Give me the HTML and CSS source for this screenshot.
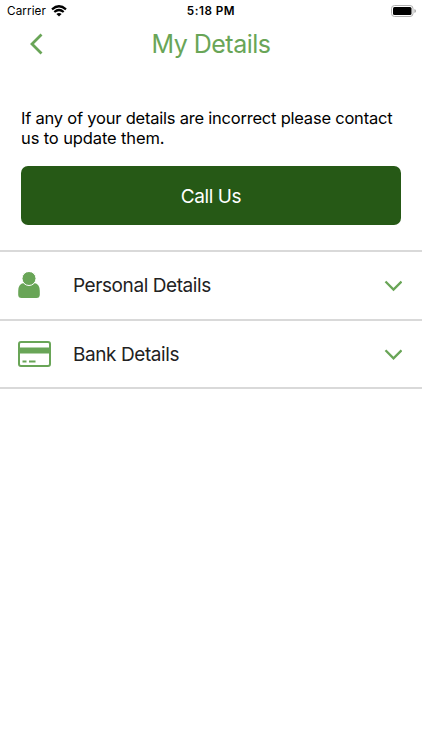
FILE: index.html
```html
<!DOCTYPE html>
<html lang="en">
<head>
<meta charset="utf-8">
<title>My Details</title>
<link rel="stylesheet" href="styles.css">
</head>
<body>
<div class="status">
  <div class="carrier"><span class="carrier-name">Carrier</span>
    <svg width="16" height="12" viewBox="0 0 16 12"><path d="M1 4.300Q8-1.800 15 4.300M3.300 7Q8 3 12.700 7" fill="none" stroke="#000" stroke-width="2.200"/><path d="M5.400 9Q8 6.800 10.600 9L8 11.600z"/></svg>
  </div>
  <span class="time">5:18 PM</span>
  <svg class="battery" width="25" height="12" viewBox="0 0 25 12"><rect x=".5" y=".5" width="21.500" height="11" rx="3" fill="none" stroke="#b0b0b0"/><rect x="2" y="2" width="18.500" height="8" rx="1.500"/><path d="M23.500 4q1.300 .5 1.300 2t-1.300 2z" fill="#909090"/></svg>
</div>
<header class="header">
  <svg class="back" width="14" height="22" viewBox="0 0 14 22"><path d="M12.500 1.500 3 11l9.500 9.500" fill="none" stroke="#69a557" stroke-width="2.800"/></svg>
  <h1 class="title">My Details</h1>
</header>
<main>
  <section class="contact">
    <p class="note"><span class="line1">If any of your details are incorrect please contact</span><br><span class="line2">us to update them.</span></p>
    <button class="call"><span>Call Us</span></button>
  </section>
  <div class="row">
    <svg class="icon" width="34" height="28" viewBox="0 0 34 28"><path d="M5.200 11.300C1.500 12 .2 15 .2 20v2.500Q.2 26 3.500 26h15q3.300 0 3.300-3.500V20c0-5-1.300-8-5-8.700z" fill="#69a557"/><circle cx="11" cy="6.500" r="7" fill="#69a557" stroke="#fff"/></svg>
    <span class="label">Personal Details</span>
    <svg class="chevron" width="18" height="12" viewBox="0 0 18 12"><path d="m1.500 1.500 8 8 8-8" fill="none" stroke="#69a557" stroke-width="2.300"/></svg>
  </div>
  <div class="row">
    <svg class="icon" width="34" height="28" viewBox="0 0 34 28"><rect x="1" y="2" width="31" height="24" rx="2" fill="none" stroke="#69a557" stroke-width="2"/><path d="M1 7.500h31v6H1zM4.500 20.500h4v2h-4zM11 20.500h6.500v2H11z" fill="#69a557"/></svg>
    <span class="label">Bank Details</span>
    <svg class="chevron" width="18" height="12" viewBox="0 0 18 12"><path d="m1.500 2.300 8 8 8-8" fill="none" stroke="#69a557" stroke-width="2.300"/></svg>
  </div>
</main>
</body>
</html>
```
FILE: styles.css
```css
* { box-sizing: border-box; }
body { margin: 0; background: #fff; color: #222; font-family: Inter, sans-serif; }
svg { display: block; flex: none; }
.status { height: 22px; display: grid; grid-template-columns: 1fr auto 1fr; align-items: center; padding: 0 6px 0 7px; }
.carrier { display: flex; align-items: center; gap: 5px; color: #000; font-size: 11.7px; letter-spacing: .1px; }
.time { color: #000; font-size: 11.7px; font-weight: 600; letter-spacing: .5px; margin-right: 1px; }
.battery { justify-self: end; }
.header { height: 43px; display: grid; grid-template-columns: 30px 1fr 30px; align-items: center; padding: 0 29px; }
.title { margin: 0; text-align: center; font-size: 25px; font-weight: 400; color: #69a557; letter-spacing: -.5px; }
.contact { padding: 43px 21px 25px; }
.note { margin: 0 0 18px; color: #000; font-size: 16.5px; line-height: 20px; letter-spacing: -.22px; white-space: nowrap; }
.line2 { letter-spacing: -.12px; }
.call { display: block; width: 100%; height: 59px; border: 0; border-radius: 7px; background: #265916; color: #fff; font: 400 19px Inter, sans-serif; letter-spacing: -.4px; padding: 2px 0 0; }
.row { height: 69px; border-top: 2px solid #d9d9d9; display: flex; align-items: center; padding: 0 20px 0 18px; }
.row:last-child { height: 70px; border-bottom: 2px solid #d9d9d9; }
.label { margin-left: 21px; font-size: 19px; letter-spacing: -.42px; }
.chevron { margin-left: auto; }
```
